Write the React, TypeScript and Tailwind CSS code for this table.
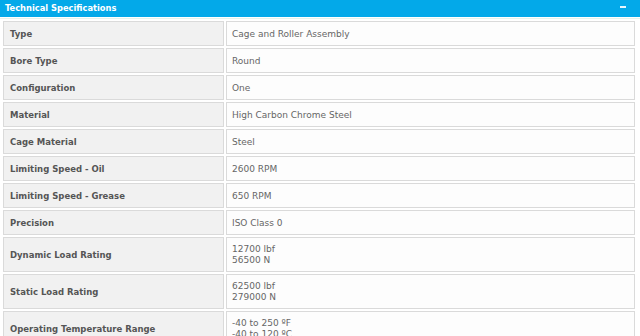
import React from 'react';

const specs: { label: string; value: string[] }[] = [
  { label: 'Type', value: ['Cage and Roller Assembly'] },
  { label: 'Bore Type', value: ['Round'] },
  { label: 'Configuration', value: ['One'] },
  { label: 'Material', value: ['High Carbon Chrome Steel'] },
  { label: 'Cage Material', value: ['Steel'] },
  { label: 'Limiting Speed - Oil', value: ['2600 RPM'] },
  { label: 'Limiting Speed - Grease', value: ['650 RPM'] },
  { label: 'Precision', value: ['ISO Class 0'] },
  { label: 'Dynamic Load Rating', value: ['12700 lbf', '56500 N'] },
  { label: 'Static Load Rating', value: ['62500 lbf', '279000 N'] },
  { label: 'Operating Temperature Range', value: ['-40 to 250 ºF', '-40 to 120 ºC'] },
];

export default function App() {
  return (
    <div className="w-[640px] h-[336px] overflow-hidden bg-white font-['DejaVu_Sans',Verdana,sans-serif]">
      {/* Header bar */}
      <div className="flex justify-between h-[17px] bg-[#03a9e9] pl-[5px] pr-[14px]">
        <span className="self-center text-[8.3px] font-bold text-white leading-none">Technical Specifications</span>
        <span className="block mt-[6px] w-[6px] h-[1.5px] bg-white/90" />
      </div>
      <div className="h-[1px] mt-[1px] bg-[#e4f4ec]" />

      {/* Spec table */}
      <table className="ml-[1px] w-[636px] border-separate border-spacing-[2px] text-[9px]">
        <tbody>
          {specs.map((s) => (
            <tr key={s.label}>
              <td
                className={`w-[221px] border border-[#dadada] bg-[#f1f1f1] pl-[6px] pt-[1px] text-[8.5px] font-bold text-[#555] ${
                  s.value.length > 1 ? 'h-[35px]' : 'h-[25px]'
                }`}
              >
                {s.label}
              </td>
              <td className="border border-[#dadada] bg-[#fdfdfd] pl-[5px] pt-[1px] text-[#666] leading-[11px]">
                {s.value.map((v) => (
                  <div key={v}>{v}</div>
                ))}
              </td>
            </tr>
          ))}
        </tbody>
      </table>
    </div>
  );
}
